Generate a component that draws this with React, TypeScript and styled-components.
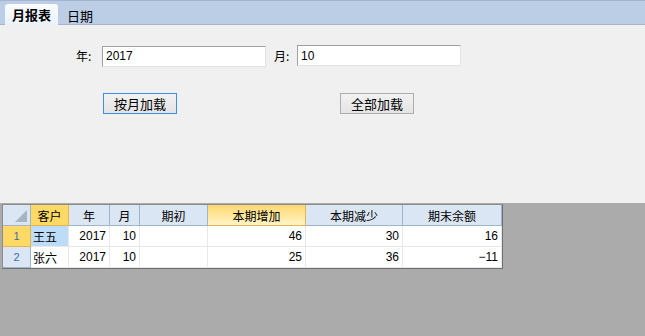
import React, { FC } from "react";
import styled, { createGlobalStyle } from "styled-components";

const GlobalStyle = createGlobalStyle`
  html, body {
    margin: 0;
    padding: 0;
    width: 645px;
    height: 336px;
    overflow: hidden;
    font-family: "Liberation Sans", "Noto Sans CJK SC", sans-serif;
    font-size: 12px;
    color: #000;
  }
`;

const Page = styled.div`
  width: 645px;
  height: 336px;
  display: flex;
  flex-direction: column;
`;

const TabBar = styled.div`
  height: 25px;
  box-sizing: border-box;
  background: #bccee6;
  border-top: 1px solid #a3b6cf;
  border-bottom: 1px solid #a8b5c6;
  display: flex;
  align-items: flex-end;
  padding-left: 5px;
`;

interface TabProps {
  active?: boolean;
}

const Tab = styled.div<TabProps>`
  height: ${(p) => (p.active ? "21px" : "20px")};
  margin-bottom: -1px;
  box-sizing: border-box;
  padding: 0 ${(p) => (p.active ? "7px" : "9px")};
  display: flex;
  align-items: center;
  font-size: 13px;
  font-weight: ${(p) => (p.active ? "bold" : "normal")};
  background: ${(p) => (p.active ? "linear-gradient(#fafcff, #eaf3fd)" : "transparent")};
  border-radius: 3px 3px 0 0;
  font-family: "Noto Sans CJK SC", sans-serif;
`;

const FormPanel = styled.div`
  height: 178px;
  background: #f0f0f0;
  padding-top: 20px;
  box-sizing: border-box;
`;

const FieldRow = styled.div`
  display: flex;
  align-items: center;
  padding-left: 76px;
  height: 21px;
`;

interface LabelProps {
  width: number;
}

const Label = styled.span<LabelProps>`
  width: ${(p) => p.width}px;
  font-family: "Noto Sans CJK SC", sans-serif;
  font-size: 12px;
  margin-top: -1px;
`;

interface InputProps {
  offset?: number;
}

const TextInput = styled.div<InputProps>`
  width: 164px;
  height: 21px;
  box-sizing: border-box;
  background: #fff;
  border-top: 1px solid #a0a0a0;
  border-left: 1px solid #a0a0a0;
  border-right: 1px solid #e3e3e3;
  border-bottom: 1px solid #e3e3e3;
  padding-left: 3px;
  display: flex;
  align-items: center;
  font-size: 12px;
  margin-top: ${(p) => p.offset || 0}px;
`;

const Spacer = styled.div<{ width: number }>`
  width: ${(p) => p.width}px;
`;

const ButtonRow = styled.div`
  display: flex;
  padding-left: 103px;
  margin-top: 27px;
`;

interface ButtonProps {
  focused?: boolean;
}

const Button = styled.div<ButtonProps>`
  width: 74px;
  height: 21px;
  box-sizing: border-box;
  border: 1px solid ${(p) => (p.focused ? "#3d8ee6" : "#adadad")};
  background: linear-gradient(#f2f2f2, #e4e4e4);
  display: flex;
  align-items: center;
  justify-content: center;
  font-family: "Noto Sans CJK SC", sans-serif;
  font-size: 13px;
`;

const GridArea = styled.div`
  flex: 1;
  background: #ababab;
  padding: 1px 0 0 2px;
`;

const Grid = styled.div`
  display: grid;
  grid-template-columns: 28px 38px 41px 30px 68px 98px 97px 99px;
  grid-auto-rows: 21px;
  width: 501px;
  box-sizing: border-box;
  background: #fff;
  border: 1px solid #8c8c8c;
  border-right-color: #6e6e6e;
  border-bottom-color: #6e6e6e;
`;

interface HeadProps {
  selected?: "solid" | "fade";
}

const HeadCell = styled.div<HeadProps>`
  box-sizing: border-box;
  display: flex;
  align-items: center;
  justify-content: center;
  font-family: "Noto Sans CJK SC", sans-serif;
  font-size: 12px;
  border-right: 1px solid ${(p) => (p.selected ? "#e6b54c" : "#9fb5cc")};
  border-bottom: 1px solid ${(p) => (p.selected ? "#e6b54c" : "#9fb5cc")};
  background: ${(p) =>
    p.selected === "solid"
      ? "#ffd966"
      : p.selected === "fade"
      ? "linear-gradient(#ffd870, #fff4c8)"
      : "#dbe6f4"};
`;

const Corner = styled(HeadCell)`
  position: relative;
`;

const CornerMark = styled.div`
  position: absolute;
  right: 3px;
  bottom: 3px;
  width: 0;
  height: 0;
  border-left: 12px solid transparent;
  border-bottom: 12px solid #a6b5c6;
`;

interface RowHeadProps {
  selected?: boolean;
}

const RowHead = styled.div<RowHeadProps>`
  box-sizing: border-box;
  display: flex;
  align-items: center;
  justify-content: center;
  font-size: 11px;
  color: #3b6ca8;
  border-right: 1px solid ${(p) => (p.selected ? "#e6b54c" : "#9fb5cc")};
  border-bottom: 1px solid ${(p) => (p.selected ? "#e6b54c" : "#9fb5cc")};
  background: ${(p) => (p.selected ? "#ffd966" : "#dbe6f4")};
`;

interface CellProps {
  align?: "left" | "right";
  selected?: boolean;
}

const Cell = styled.div<CellProps>`
  box-sizing: border-box;
  display: flex;
  align-items: center;
  justify-content: ${(p) => (p.align === "left" ? "flex-start" : "flex-end")};
  padding: 0 3px 0 2px;
  font-size: 12px;
  font-family: "Liberation Sans", "Noto Sans CJK SC", sans-serif;
  border-right: 1px solid #e8e8e8;
  border-bottom: 1px solid #e8e8e8;
  background: ${(p) => (p.selected ? "#bcdcf8" : "#fff")};
`;

const CnText = styled.span`
  font-family: "Noto Sans CJK SC", sans-serif;
  font-size: 12px;
`;

const rows = [
  { name: "王五", year: 2017, month: 10, open: "", add: 46, sub: 30, end: 16 },
  { name: "张六", year: 2017, month: 10, open: "", add: 25, sub: 36, end: -11 },
];

const headers: { label: string; selected?: "solid" | "fade" }[] = [
  { label: "客户", selected: "solid" },
  { label: "年" },
  { label: "月" },
  { label: "期初" },
  { label: "本期增加", selected: "fade" },
  { label: "本期减少" },
  { label: "期末余额" },
];

// negative numbers use a wide minus like the original grid
const formatNum = (n: number) => (n < 0 ? "\u2212" + Math.abs(n) : String(n));

const App: FC = () => {
  return (
    <Page>
      <GlobalStyle />
      <TabBar>
        <Tab active>月报表</Tab>
        <Tab>日期</Tab>
      </TabBar>
      <FormPanel>
        <FieldRow>
          <Label width={26}>年:</Label>
          <TextInput offset={1}>2017</TextInput>
          <Spacer width={8} />
          <Label width={23}>月:</Label>
          <TextInput>10</TextInput>
        </FieldRow>
        <ButtonRow>
          <Button focused>按月加载</Button>
          <Spacer width={163} />
          <Button>全部加载</Button>
        </ButtonRow>
      </FormPanel>
      <GridArea>
        <Grid>
          <Corner>
            <CornerMark />
          </Corner>
          {headers.map((h) => (
            <HeadCell key={h.label} selected={h.selected}>
              {h.label}
            </HeadCell>
          ))}
          {rows.map((r, i) => (
            <React.Fragment key={r.name}>
              <RowHead selected={i === 0}>{i + 1}</RowHead>
              <Cell align="left" selected={i === 0}>
                <CnText>{r.name}</CnText>
              </Cell>
              <Cell>{r.year}</Cell>
              <Cell>{r.month}</Cell>
              <Cell>{r.open}</Cell>
              <Cell>{formatNum(r.add)}</Cell>
              <Cell>{formatNum(r.sub)}</Cell>
              <Cell>{formatNum(r.end)}</Cell>
            </React.Fragment>
          ))}
        </Grid>
      </GridArea>
    </Page>
  );
};

export default App;
